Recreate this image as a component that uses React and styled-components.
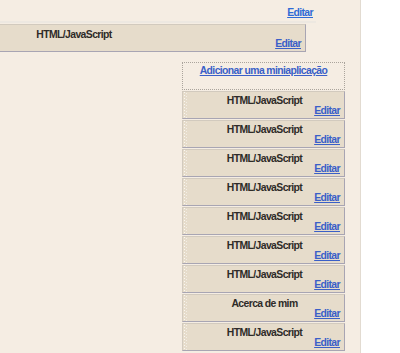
import React from "react";
import styled, { createGlobalStyle } from "styled-components";

const Global = createGlobalStyle`
  html, body { margin: 0; padding: 0; background: #ffffff; }
  body { font-family: "Liberation Sans", Arial, sans-serif; }
`;

const Page = styled.div`
  width: 360px;
  height: 353px;
  background: #f5ede3;
  border-right: 1px solid #e2dbd1;
  overflow: hidden;
  display: flex;
  flex-direction: column;
`;

const Link = styled.a`
  font: bold 10.4px/12px "Liberation Sans", Arial, sans-serif;
  letter-spacing: -0.6px;
  color: ${(p) => (p.$bright ? "#2f6bd6" : "#3a5fc8")};
  text-decoration: underline;
  cursor: pointer;
`;

const TopBar = styled.div`
  width: 316px;
  height: 23px;
  box-sizing: border-box;
  padding: 7px 3px 0 0;
  text-align: right;
  border-bottom: 2px solid #ede8e1;
  font-size: 10.4px;
  line-height: 12px;
`;

const Widget = styled.div`
  box-sizing: border-box;
  height: 28px;
  border: 1px solid;
  border-color: #d2cabe #a8a5b3 #a8a5b3 #d2cabe;
  background:
    repeating-linear-gradient(to bottom, #fbf8f3 0 1px, transparent 1px 3px) 1px 0 / 1px 100% no-repeat,
    repeating-linear-gradient(to bottom, transparent 0 1px, #f3eee6 1px 2px, transparent 2px 3px) 3px 0 / 1px 100% no-repeat,
    #e6dccb;
  display: flex;
  flex-direction: column;
  padding: 3px 4px 0 6px;
`;

const WideWidget = styled(Widget)`
  margin-top: 1px;
  margin-left: -160px;
  width: 466px;
  background: #e6dccb;
  padding: 4px 4px 0 6px;
`;

const Title = styled.div`
  font: bold 10.4px/11px "Liberation Sans", Arial, sans-serif;
  letter-spacing: -0.6px;
  color: #2e2b28;
  text-align: center;
`;

const EditRow = styled.div`
  text-align: right;
  font-size: 10.4px;
  line-height: 12px;
  margin-top: ${(p) => p.$offset || 0}px;
`;

const Column = styled.div`
  margin-left: 182px;
  margin-top: 10px;
  width: 163px;
  display: flex;
  flex-direction: column;
  gap: 1px;
`;

const DropZone = styled.div`
  box-sizing: border-box;
  height: 28px;
  border: 1px dotted #aaa49c;
  text-align: center;
  padding-top: 2px;
  font-size: 10.4px;
  line-height: 12px;
`;

const widgets = [
  "HTML/JavaScript",
  "HTML/JavaScript",
  "HTML/JavaScript",
  "HTML/JavaScript",
  "HTML/JavaScript",
  "HTML/JavaScript",
  "HTML/JavaScript",
  "Acerca de mim",
  "HTML/JavaScript",
];

export default function App() {
  return (
    <>
      <Global />
      <Page>
        <TopBar>
          <Link $bright>Editar</Link>
        </TopBar>
        <WideWidget>
          <Title>HTML/JavaScript</Title>
          <EditRow $offset={-2}>
            <Link>Editar</Link>
          </EditRow>
        </WideWidget>
        <Column>
          <DropZone>
            <Link>Adicionar uma miniaplicação</Link>
          </DropZone>
          {widgets.map((w, i) => (
            <Widget key={i}>
              <Title>{w}</Title>
              <EditRow $offset={-1}>
                <Link>Editar</Link>
              </EditRow>
            </Widget>
          ))}
        </Column>
      </Page>
    </>
  );
}
